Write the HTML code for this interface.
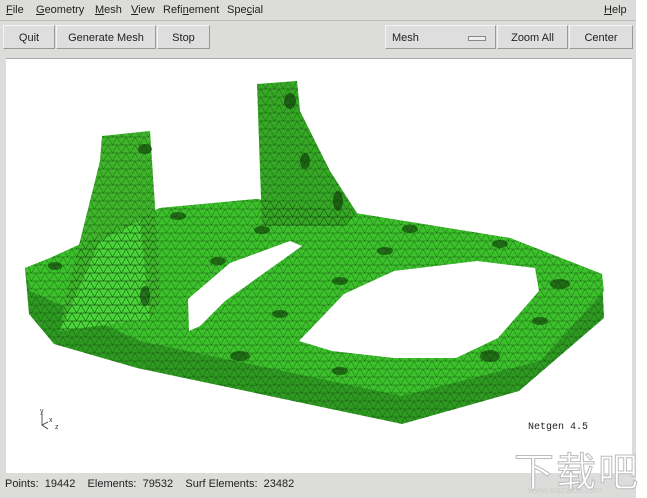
<!DOCTYPE html>
<html><head><meta charset="utf-8"><style>
body{margin:0;width:647px;height:498px;background:#dcdcda;font-family:"Liberation Sans",sans-serif;font-size:11px;color:#222;position:relative;overflow:hidden}
.menu{position:absolute;top:0;left:0;width:636px;height:20px;border-bottom:1px solid #bbb}
.menu span{position:absolute;top:4px}
.btn{position:absolute;top:25px;height:24px;line-height:24px;text-align:center;background:#dedede;border:1px solid #f4f4f4;border-right-color:#999;border-bottom-color:#999;box-sizing:border-box}
.canvas{position:absolute;left:6px;top:58px;width:626px;height:414px;background:#fff;border-top:1px solid #aaa}
.rt{position:absolute;left:636px;top:0;width:11px;height:498px;background:#fff}
.status{position:absolute;top:478px;left:5px;font-size:11px}
u{text-decoration:underline}
</style></head><body>
<div class="menu">
<span style="left:6px"><u>F</u>ile</span>
<span style="left:36px"><u>G</u>eometry</span>
<span style="left:95px"><u>M</u>esh</span>
<span style="left:131px"><u>V</u>iew</span>
<span style="left:163px">Refi<u>n</u>ement</span>
<span style="left:227px">Spe<u>c</u>ial</span>
<span style="left:604px"><u>H</u>elp</span>
</div>
<div class="btn" style="left:3px;width:52px">Quit</div>
<div class="btn" style="left:56px;width:100px">Generate Mesh</div>
<div class="btn" style="left:157px;width:53px">Stop</div>
<div class="btn" style="left:385px;width:111px;text-align:left;padding-left:6px">Mesh<span style="position:absolute;left:82px;top:10px;width:16px;height:3px;background:#eee;border:1px solid #888"></span></div>
<div class="btn" style="left:497px;width:71px">Zoom All</div>
<div class="btn" style="left:569px;width:64px">Center</div>
<div class="canvas">
<svg width="626" height="414" viewBox="6 58 626 414" style="position:absolute;left:0;top:0">
<defs><pattern id="m" width="9" height="8" patternUnits="userSpaceOnUse"><path d="M0 0H9M0 0L4.5 8L9 0M0 8H9" stroke="#0a3a05" stroke-width="0.5" fill="none" opacity="0.7"/></pattern></defs>
<g>
<polygon points="25,267 50,257 160,207 257,198 361,213 510,237 602,273 604,317 519,390 402,423 137,367 54,343 29,313" fill="#2f9a22"/>
<polygon points="25,267 50,257 160,207 257,198 361,213 510,237 602,273 604,290 540,360 402,395 140,340 30,290" fill="#3cc02c"/>
<polygon points="102,135 150,130 158,250 160,300 150,318 60,330 65,300 100,160" fill="#3fb52c"/>
<polygon points="100,240 140,220 150,318 60,330" fill="#4ad43a"/>
<polygon points="257,83 297,80 300,110 330,170 357,212 345,225 262,225" fill="#36a826"/>
<polygon points="25,267 50,257 160,207 257,198 361,213 510,237 602,273 604,317 519,390 402,423 137,367 54,343 29,313" fill="url(#m)"/>
<polygon points="102,135 150,130 158,250 160,300 150,318 60,330 65,300 100,160" fill="url(#m)"/>
<polygon points="257,83 297,80 300,110 330,170 357,212 345,225 262,225" fill="url(#m)"/>
<polygon points="189,330 188,298 230,262 290,240 302,245 225,300 200,325" fill="#fff"/>
<polygon points="299,340 344,293 394,270 477,260 535,267 539,290 498,337 456,357 394,357 332,350" fill="#fff"/>
</g>
<g fill="#0a2a05" opacity="0.55">
<ellipse cx="145" cy="148" rx="7" ry="5"/><ellipse cx="290" cy="100" rx="6" ry="8"/><ellipse cx="305" cy="160" rx="5" ry="8"/>
<ellipse cx="338" cy="200" rx="5" ry="10"/><ellipse cx="178" cy="215" rx="8" ry="4"/><ellipse cx="262" cy="229" rx="8" ry="4"/>
<ellipse cx="410" cy="228" rx="8" ry="4"/><ellipse cx="500" cy="243" rx="8" ry="4"/><ellipse cx="385" cy="250" rx="8" ry="4"/>
<ellipse cx="560" cy="283" rx="10" ry="5"/><ellipse cx="340" cy="280" rx="8" ry="4"/><ellipse cx="280" cy="313" rx="8" ry="4"/>
<ellipse cx="240" cy="355" rx="10" ry="5"/><ellipse cx="340" cy="370" rx="8" ry="4"/><ellipse cx="490" cy="355" rx="10" ry="6"/>
<ellipse cx="540" cy="320" rx="8" ry="4"/><ellipse cx="218" cy="260" rx="8" ry="4"/><ellipse cx="55" cy="265" rx="7" ry="4"/><ellipse cx="145" cy="295" rx="5" ry="10"/>
</g>
<text x="528" y="428" font-family="Liberation Mono,monospace" font-size="10" fill="#222">Netgen 4.5</text>
<path d="M42 412V424L48 421M42 424L48 428" stroke="#333" fill="none" stroke-width="0.8"/>
<text x="40" y="412" font-size="7" fill="#333">y</text><text x="49" y="421" font-size="7" fill="#333">x</text><text x="55" y="428" font-size="7" fill="#333">z</text>
</svg>
</div>
<div class="rt"></div>
<div class="status">Points:&nbsp; 19442 &nbsp;&nbsp; Elements:&nbsp; 79532 &nbsp;&nbsp; Surf Elements:&nbsp; 23482</div>
<div style="position:absolute;left:514px;top:440px;font-family:'Noto Sans CJK SC',sans-serif;font-size:40px;color:#fff;-webkit-text-stroke:1px #bbb;letter-spacing:2px">下载吧</div>
<div style="position:absolute;left:528px;top:485px;font-size:9px;color:#ccc">www.xiazaiba.com</div>
</body></html>
